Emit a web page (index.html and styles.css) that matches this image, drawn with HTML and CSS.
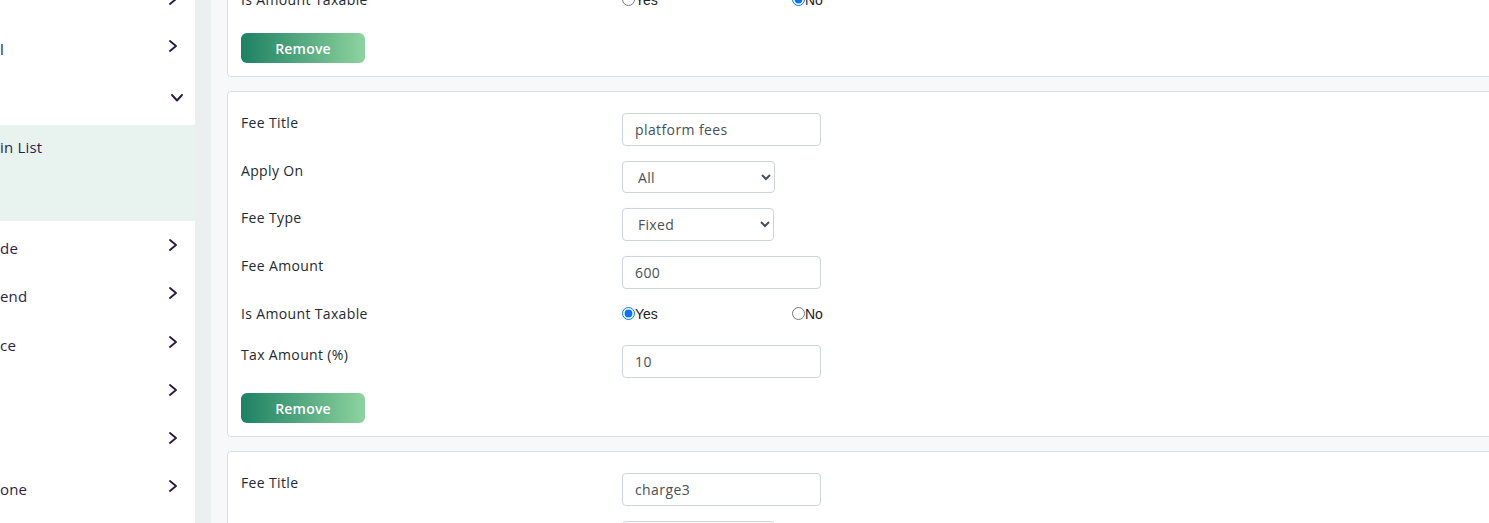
FILE: index.html
```html
<!DOCTYPE html>
<html lang="en">
<head>
<meta charset="utf-8">
<title>Fees</title>
<link rel="stylesheet" href="styles.css">
</head>
<body>
  <aside class="sidebar">
    <div class="nav-item"><span class="nav-text"></span><svg class="chev" width="8" height="12" viewBox="0 0 8 12"><polyline points="1,1 7,6 1,11"/></svg></div>
    <div class="nav-item"><span class="nav-text">l</span><svg class="chev" width="8" height="12" viewBox="0 0 8 12"><polyline points="1,1 7,6 1,11"/></svg></div>
    <div class="nav-item nav-open"><span class="nav-text"></span><svg class="chev-down" width="12" height="8" viewBox="0 0 12 8"><polyline points="1,1 6,6.5 11,1"/></svg></div>
    <div class="nav-sub"><span class="nav-text">in List</span></div>
    <div class="nav-item"><span class="nav-text">de</span><svg class="chev" width="8" height="12" viewBox="0 0 8 12"><polyline points="1,1 7,6 1,11"/></svg></div>
    <div class="nav-item"><span class="nav-text">end</span><svg class="chev" width="8" height="12" viewBox="0 0 8 12"><polyline points="1,1 7,6 1,11"/></svg></div>
    <div class="nav-item"><span class="nav-text">ce</span><svg class="chev" width="8" height="12" viewBox="0 0 8 12"><polyline points="1,1 7,6 1,11"/></svg></div>
    <div class="nav-item"><span class="nav-text"></span><svg class="chev" width="8" height="12" viewBox="0 0 8 12"><polyline points="1,1 7,6 1,11"/></svg></div>
    <div class="nav-item"><span class="nav-text"></span><svg class="chev" width="8" height="12" viewBox="0 0 8 12"><polyline points="1,1 7,6 1,11"/></svg></div>
    <div class="nav-item"><span class="nav-text">one</span><svg class="chev" width="8" height="12" viewBox="0 0 8 12"><polyline points="1,1 7,6 1,11"/></svg></div>
  </aside>
  <div class="gutter"></div>
  <main class="main">
    <section class="card card-first">
      <div class="row">
        <label class="label">Is Amount Taxable</label>
        <div class="radios">
          <label class="radio"><input type="radio" name="tax1">Yes</label>
          <label class="radio"><input type="radio" name="tax1" checked>No</label>
        </div>
      </div>
      <button class="btn-remove" type="button">Remove</button>
    </section>

    <section class="card">
      <div class="row">
        <label class="label">Fee Title</label>
        <input class="field" type="text" value="platform fees">
      </div>
      <div class="row">
        <label class="label">Apply On</label>
        <select class="select select-apply"><option>All</option></select>
      </div>
      <div class="row">
        <label class="label">Fee Type</label>
        <select class="select"><option>Fixed</option></select>
      </div>
      <div class="row">
        <label class="label">Fee Amount</label>
        <input class="field" type="text" value="600">
      </div>
      <div class="row">
        <label class="label">Is Amount Taxable</label>
        <div class="radios">
          <label class="radio"><input type="radio" name="tax2" checked>Yes</label>
          <label class="radio"><input type="radio" name="tax2">No</label>
        </div>
      </div>
      <div class="row">
        <label class="label">Tax Amount (%)</label>
        <input class="field" type="text" value="10">
      </div>
      <button class="btn-remove" type="button">Remove</button>
    </section>

    <section class="card">
      <div class="row">
        <label class="label">Fee Title</label>
        <input class="field" type="text" value="charge3">
      </div>
      <div class="row">
        <label class="label">Apply On</label>
        <select class="select select-apply"><option>All</option></select>
      </div>
    </section>
  </main>
</body>
</html>
```

FILE: styles.css
```css
* {
  box-sizing: border-box;
}

html, body {
  margin: 0;
  height: 523px;
  overflow: hidden;
}

body {
  display: flex;
  font-family: "Open Sans", "Liberation Sans", sans-serif;
  background: #f7f8fa;
  color: #212529;
}

/* left navigation */
.sidebar {
  width: 195px;
  flex: none;
  background: #ffffff;
  display: flex;
  flex-direction: column;
  margin-top: -25px;
  overflow: hidden;
}

.nav-item {
  height: 48.2px;
  flex: none;
  display: flex;
  align-items: center;
  justify-content: space-between;
  padding-right: 18px;
}

.nav-item:first-child {
  height: 47px;
}

.nav-open {
  height: 55px;
  padding-right: 12px;
}

.nav-text {
  font-size: 15px;
  line-height: 18px;
  letter-spacing: 0.2px;
  color: #2e1d4b;
  padding-top: 6px;
  white-space: nowrap;
}

.chev,
.chev-down {
  flex: none;
  fill: none;
  stroke: #2b1a48;
  stroke-width: 1.9;
  stroke-linecap: round;
  stroke-linejoin: round;
}

.nav-sub {
  height: 96px;
  flex: none;
  background: #e8f2ee;
  padding-top: 11px;
}

.gutter {
  width: 16px;
  flex: none;
  background: #eceff0;
}

/* content area */
.main {
  flex: 1;
  min-width: 0;
  padding-left: 16px;
  overflow: hidden;
}

.card {
  width: calc(100% + 40px);
  background: #ffffff;
  border: 1px solid #dcdfe2;
  border-radius: 4px;
  padding: 21px 13px 13px 13px;
  margin-bottom: 14px;
}

.card-first {
  margin-top: -32px;
}

.card-first .row {
  margin-bottom: 17px;
}

.row {
  display: grid;
  grid-template-columns: 381px auto;
  align-items: start;
  margin-bottom: 15px;
}

.label {
  font-size: 14px;
  line-height: 20px;
  letter-spacing: 0.35px;
  color: #222a33;
}

.field {
  width: 199px;
  height: 33px;
  border: 1px solid #ced4da;
  border-radius: 4px;
  padding: 0 12px;
  font-family: "Open Sans", "Liberation Sans", sans-serif;
  font-size: 14px;
  letter-spacing: 0.4px;
  color: #495057;
  background: #ffffff;
}

.select {
  width: 152px;
  height: 33px;
  border: 1px solid #ced4da;
  border-radius: 4px;
  padding: 0 11px;
  font-family: "Open Sans", "Liberation Sans", sans-serif;
  font-size: 14px;
  letter-spacing: 0.3px;
  color: #495057;
  background: #ffffff;
}

.select-apply {
  width: 153px;
  height: 32px;
}

.radios {
  display: grid;
  grid-template-columns: 170px auto;
  height: 26px;
}

.radio {
  display: flex;
  align-items: center;
  align-self: start;
  height: 19px;
  font-family: "Liberation Sans", Arial, sans-serif;
  font-size: 14px;
  color: #222;
}

.radio input {
  margin: 0;
  width: 13px;
  height: 13px;
}

.btn-remove {
  display: block;
  width: 124px;
  height: 30px;
  border: none;
  border-radius: 6px;
  background: linear-gradient(90deg, #1d8163 0%, #8dd39e 100%);
  color: #ffffff;
  font-family: "Open Sans", "Liberation Sans", sans-serif;
  font-size: 14px;
  font-weight: 600;
  letter-spacing: 0.2px;
  padding: 0;
}
```
